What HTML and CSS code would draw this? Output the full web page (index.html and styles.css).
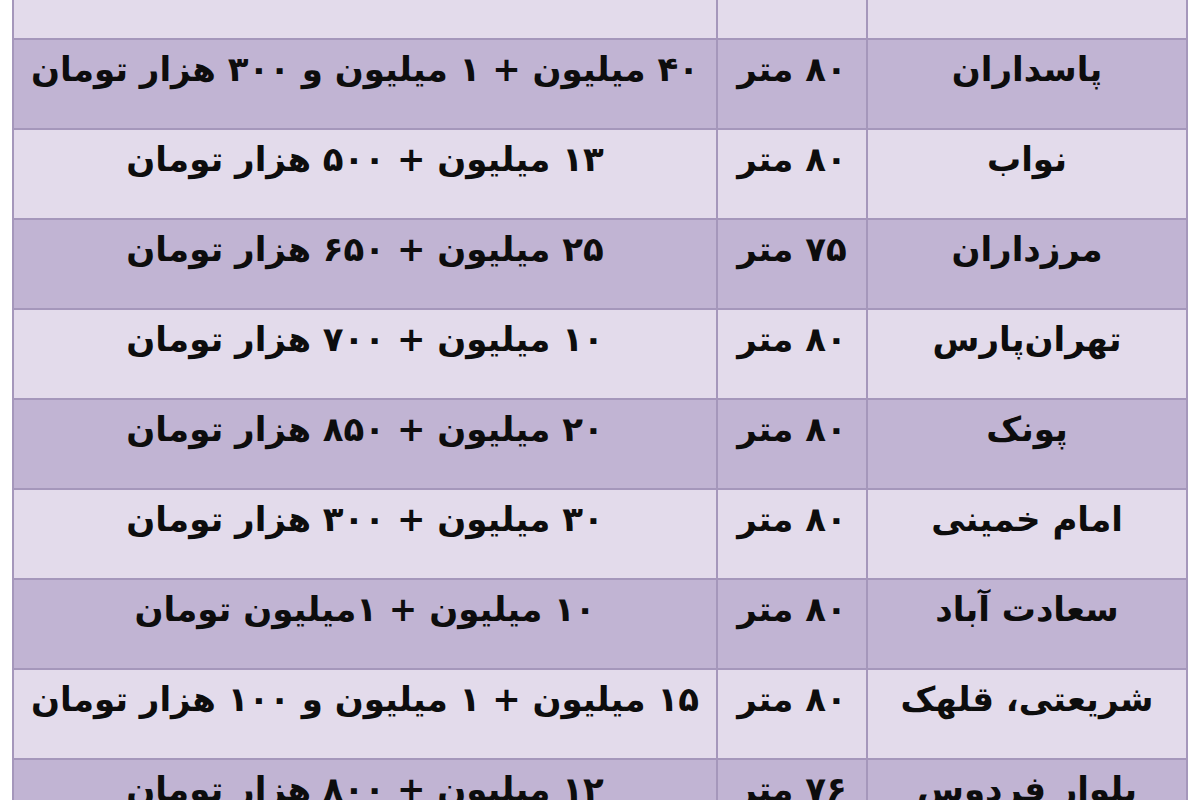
FILE: index.html
```html
<!DOCTYPE html>
<html lang="fa" dir="rtl">
<head>
<meta charset="utf-8">
<title>جدول اجاره</title>
<link rel="stylesheet" href="styles.css">
</head>
<body>
<div class="table">
  <div class="cell light"></div><div class="cell light"></div><div class="cell light"></div>
  <div class="cell dark">پاسداران</div><div class="cell dark">۸۰ متر</div><div class="cell dark">۴۰ میلیون + ۱ میلیون و ۳۰۰ هزار تومان</div>
  <div class="cell light">نواب</div><div class="cell light">۸۰ متر</div><div class="cell light">۱۳ میلیون + ۵۰۰ هزار تومان</div>
  <div class="cell dark">مرزداران</div><div class="cell dark">۷۵ متر</div><div class="cell dark">۲۵ میلیون + ۶۵۰ هزار تومان</div>
  <div class="cell light">تهران‌پارس</div><div class="cell light">۸۰ متر</div><div class="cell light">۱۰ میلیون + ۷۰۰ هزار تومان</div>
  <div class="cell dark">پونک</div><div class="cell dark">۸۰ متر</div><div class="cell dark">۲۰ میلیون + ۸۵۰ هزار تومان</div>
  <div class="cell light">امام خمینی</div><div class="cell light">۸۰ متر</div><div class="cell light">۳۰ میلیون + ۳۰۰ هزار تومان</div>
  <div class="cell dark">سعادت آباد</div><div class="cell dark">۸۰ متر</div><div class="cell dark">۱۰ میلیون + ۱میلیون تومان</div>
  <div class="cell light">شریعتی، قلهک</div><div class="cell light">۸۰ متر</div><div class="cell light">۱۵ میلیون + ۱ میلیون و ۱۰۰ هزار تومان</div>
  <div class="cell dark">بلوار فردوس</div><div class="cell dark">۷۶ متر</div><div class="cell dark">۱۲ میلیون + ۸۰۰ هزار تومان</div>
</div>
</body>
</html>
```

FILE: styles.css
```css
html, body {
  margin: 0;
  padding: 0;
  background: #ffffff;
  overflow: hidden;
  height: 800px;
}
body {
  font-family: "DejaVu Sans", Tahoma, sans-serif;
}
.table {
  direction: rtl;
  display: grid;
  grid-template-columns: 318px 148px 702px;
  grid-auto-rows: 88px;
  gap: 2px;
  padding: 2px;
  margin: -52px 12px 0 12px;
  background: #a597bb;
}
.cell {
  text-align: center;
  font-size: 34px;
  font-weight: bold;
  line-height: 42px;
  padding-top: 8px;
  color: #0d0d0d;
  white-space: nowrap;
  overflow: hidden;
}
.light {
  background: #e3dbeb;
}
.dark {
  background: #c1b4d3;
}
```
